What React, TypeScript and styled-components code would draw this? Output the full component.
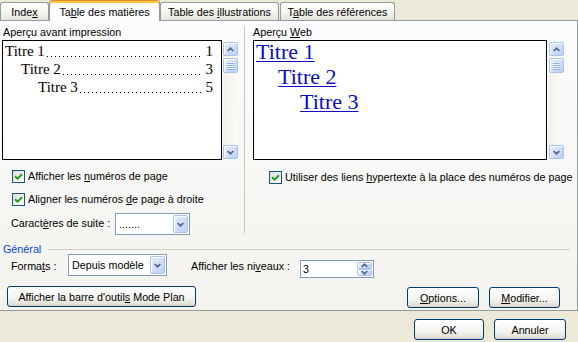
import React from "react";
import styled, { createGlobalStyle, css } from "styled-components";

const Global = createGlobalStyle`
  html, body { margin: 0; padding: 0; background: #ece9d8; }
  body { font-family: "Liberation Sans", Arial, sans-serif; font-size: 10.75px; color: #000; }
  * { box-sizing: border-box; }
`;

const Dialog = styled.div`
  width: 578px;
  height: 342px;
  display: flex;
  flex-direction: column;
  background: #ece9d8;
  overflow: hidden;
`;

const TabStrip = styled.div`
  display: flex;
  align-items: flex-end;
  height: 20px;
  position: relative;
  z-index: 2;
`;

const Tab = styled.div<{ $w: number; $active?: boolean; $ml?: number }>`
  width: ${(p) => p.$w}px;
  margin-left: ${(p) => p.$ml ?? 0}px;
  height: 18px;
  display: flex;
  align-items: center;
  justify-content: center;
  border: 1px solid #919b9c;
  border-bottom: none;
  border-radius: 3px 3px 0 0;
  background: linear-gradient(#ffffff, #f4f4f0 55%, #e4e3dc);
  white-space: nowrap;
  padding-top: 1px;
  ${(p) =>
    p.$active &&
    css`
      position: relative;
      z-index: 1;
      height: 21px;
      margin-bottom: -1px;
      background: #fcfcfe;
      border-top: 1px solid #e68b2c;
      box-shadow: inset 0 2px 0 #ffc73c;
      padding-top: 2px;
    `}
`;

const U = styled.span`
  text-decoration: underline;
`;

const Panel = styled.div`
  height: 291px;
  border: 1px solid #919b9c;
  border-left: none;
  background: linear-gradient(#fcfcfe, #f4f3ee);
  display: flex;
  flex-direction: column;
`;

const TopGrid = styled.div`
  display: grid;
  grid-template-columns: 244px 1px 1fr;
  padding-top: 5px;
`;

const Column = styled.div<{ $pl: number }>`
  display: flex;
  flex-direction: column;
  padding-left: ${(p) => p.$pl}px;
`;

const VRule = styled.div`
  background: #c9c6b8;
  margin-bottom: 2px;
`;

const SectionLabel = styled.div<{ $pl?: number }>`
  height: 13px;
  line-height: 13px;
  margin-bottom: 1px;
  padding-left: ${(p) => p.$pl ?? 0}px;
`;

const PreviewRow = styled.div<{ $gap: number }>`
  display: flex;
  gap: ${(p) => p.$gap}px;
`;

const PreviewBox = styled.div<{ $w: number }>`
  width: ${(p) => p.$w}px;
  height: 120px;
  border: 1px solid #000;
  background: #fff;
  font-family: "Liberation Serif", "Times New Roman", serif;
`;

const PrintList = styled.div`
  padding: 1px 8px 0 2px;
  font-size: 15px;
`;

const TocLine = styled.div<{ $indent: number }>`
  display: flex;
  padding-left: ${(p) => p.$indent}px;
  line-height: 18px;
  white-space: nowrap;
`;

const Leader = styled.span`
  flex: 1;
  height: 18px;
  margin: 0 3px 0 1px;
  background-image: linear-gradient(90deg, #000 1px, transparent 1px);
  background-size: 4px 1px;
  background-repeat: repeat-x;
  background-position: 1px 14px;
`;

const WebList = styled.div`
  margin-top: -2px;
  padding-left: 2px;
  font-size: 22px;
`;

const WebLine = styled.div<{ $indent: number }>`
  padding-left: ${(p) => p.$indent}px;
  line-height: 25px;
  white-space: nowrap;
`;

const WebLink = styled.span`
  color: #0b0bc4;
  text-decoration: underline;
  text-decoration-thickness: 1px;
  text-underline-offset: 2px;
`;

const Scrollbar = styled.div`
  width: 15px;
  height: 117px;
  margin-top: 2px;
  display: flex;
  flex-direction: column;
  background: linear-gradient(90deg, #f1f0ea, #fbfbf8);
`;

const blueBtn = css`
  border: 1px solid #aac1f0;
  border-radius: 2px;
  background: linear-gradient(135deg, #e8effd, #bccff7);
  box-shadow: inset 1px 1px 0 #ffffff;
  display: flex;
  align-items: center;
  justify-content: center;
`;

const ScrollBtn = styled.div`
  ${blueBtn};
  width: 15px;
  height: 14px;
  flex: none;
`;

const Thumb = styled.div`
  ${blueBtn};
  width: 15px;
  height: 15px;
  margin-top: 2px;
  flex: none;
`;

const Grip = styled.div`
  width: 7px;
  height: 8px;
  background: repeating-linear-gradient(to bottom, #eef4fe 0 1px, #8eaef0 1px 2px);
`;

const Track = styled.div`
  flex: 1;
`;

const CheckRow = styled.div<{ $mt: number; $pl: number }>`
  display: flex;
  align-items: center;
  gap: 3px;
  height: 13px;
  line-height: 13px;
  margin-top: ${(p) => p.$mt}px;
  padding-left: ${(p) => p.$pl}px;
  white-space: nowrap;
`;

const CheckBox = styled.span`
  width: 13px;
  height: 13px;
  flex: none;
  border: 1px solid #1c5180;
  background: linear-gradient(135deg, #dcdcd7, #ffffff);
  display: inline-flex;
  align-items: center;
  justify-content: center;
`;

const FieldLine = styled.div<{ $mt: number; $pl: number }>`
  display: flex;
  align-items: flex-start;
  margin-top: ${(p) => p.$mt}px;
  padding-left: ${(p) => p.$pl}px;
`;

const FieldLabel = styled.span<{ $w: number; $mt: number; $ml?: number }>`
  width: ${(p) => p.$w}px;
  margin-top: ${(p) => p.$mt}px;
  margin-left: ${(p) => p.$ml ?? 0}px;
  line-height: 13px;
  white-space: nowrap;
  flex: none;
`;

const Select = styled.div<{ $w: number }>`
  width: ${(p) => p.$w}px;
  height: 22px;
  border: 1px solid #7f9db9;
  background: #fff;
  display: flex;
  align-items: center;
  flex: none;
`;

const SelectValue = styled.span`
  flex: 1;
  padding-left: 3px;
  white-space: nowrap;
  overflow: hidden;
`;

const ArrowBtn = styled.div`
  ${blueBtn};
  width: 15px;
  height: 18px;
  margin-right: 1px;
`;

const Spin = styled.div`
  width: 74px;
  height: 18px;
  margin-top: 6px;
  border: 1px solid #7f9db9;
  background: #fff;
  display: flex;
  flex: none;
`;

const SpinValue = styled.span`
  flex: 1;
  padding-left: 2px;
  line-height: 16px;
`;

const SpinButtons = styled.div`
  width: 16px;
  padding: 1px 1px 1px 0;
  display: flex;
  flex-direction: column;
`;

const SpinBtn = styled.div`
  ${blueBtn};
  flex: 1;
`;

const GroupHeader = styled.div`
  display: flex;
  align-items: center;
  height: 11px;
  line-height: 11px;
  margin-top: 9px;
  padding-left: 3px;
  color: #0046d5;
`;

const GroupRule = styled.div`
  flex: 1;
  height: 1px;
  margin: 0 7px;
  background: #d0d0bf;
`;

const ButtonRow = styled.div<{ $mt: number; $pr: number; $pl: number }>`
  display: flex;
  align-items: flex-start;
  gap: 10px;
  margin-top: ${(p) => p.$mt}px;
  padding: 0 ${(p) => p.$pr}px 0 ${(p) => p.$pl}px;
`;

const Spacer = styled.div`
  flex: 1;
`;

const Button = styled.button<{ $w: number; $mt?: number }>`
  width: ${(p) => p.$w}px;
  height: 21px;
  margin-top: ${(p) => p.$mt ?? 0}px;
  padding: 0;
  border: 1px solid #003c74;
  border-radius: 3px;
  background: linear-gradient(#ffffff, #f3f3ef 60%, #e3e0d6 90%, #d6d0c5);
  font-family: inherit;
  font-size: 10.75px;
  color: #000;
  white-space: nowrap;
  flex: none;
`;

const Footer = styled.div`
  display: flex;
  justify-content: flex-end;
  gap: 10px;
  padding: 8px 12px 0 0;
`;

const Chevron = ({ down }: { down?: boolean }) => (
  <svg width="7" height="5" viewBox="0 0 7 5">
    <path
      d={down ? "M0.7 1 L3.5 3.8 L6.3 1" : "M0.7 4 L3.5 1.2 L6.3 4"}
      stroke="#4d6185"
      strokeWidth="1.7"
      fill="none"
    />
  </svg>
);

const Check = () => (
  <svg width="9" height="9" viewBox="0 0 9 9">
    <path d="M1 4.2 L3.5 6.7 L8 2.2" stroke="#21a121" strokeWidth="2" fill="none" />
  </svg>
);

const VScroll = () => (
  <Scrollbar>
    <ScrollBtn>
      <Chevron />
    </ScrollBtn>
    <Thumb>
      <Grip />
    </Thumb>
    <Track />
    <ScrollBtn>
      <Chevron down />
    </ScrollBtn>
  </Scrollbar>
);

const toc = [
  { t: "Titre 1", n: "1", i: 0 },
  { t: "Titre 2", n: "3", i: 16 },
  { t: "Titre 3", n: "5", i: 33 },
];

const web = [
  { t: "Titre 1", i: 0 },
  { t: "Titre 2", i: 22 },
  { t: "Titre 3", i: 44 },
];

export default function App() {
  return (
    <Dialog>
      <Global />
      <TabStrip>
        <Tab $w={49}>
          <span>
            Inde<U>x</U>
          </span>
        </Tab>
        <Tab $w={111} $active>
          <span>
            Ta<U>b</U>le des matières
          </span>
        </Tab>
        <Tab $w={119}>
          <span>
            Table des <U>i</U>llustrations
          </span>
        </Tab>
        <Tab $w={115} $ml={1}>
          <span>
            T<U>a</U>ble des références
          </span>
        </Tab>
      </TabStrip>
      <Panel>
        <TopGrid>
          <Column $pl={2}>
            <SectionLabel $pl={1}>Aperçu avant impression</SectionLabel>
            <PreviewRow $gap={1}>
              <PreviewBox $w={220}>
                <PrintList>
                  {toc.map((r) => (
                    <TocLine key={r.t} $indent={r.i}>
                      <span>{r.t}</span>
                      <Leader />
                      <span>{r.n}</span>
                    </TocLine>
                  ))}
                </PrintList>
              </PreviewBox>
              <VScroll />
            </PreviewRow>
            <CheckRow $mt={10} $pl={10}>
              <CheckBox>
                <Check />
              </CheckBox>
              <span>
                Afficher les <U>n</U>uméros de page
              </span>
            </CheckRow>
            <CheckRow $mt={10} $pl={10}>
              <CheckBox>
                <Check />
              </CheckBox>
              <span>
                Aligner les numéros <U>d</U>e page à droite
              </span>
            </CheckRow>
            <FieldLine $mt={7} $pl={9}>
              <FieldLabel $w={104} $mt={4}>
                Caract<U>è</U>res de suite :
              </FieldLabel>
              <Select $w={75}>
                <SelectValue>.......</SelectValue>
                <ArrowBtn>
                  <Chevron down />
                </ArrowBtn>
              </Select>
            </FieldLine>
          </Column>
          <VRule />
          <Column $pl={8}>
            <SectionLabel>
              Aperçu <U>W</U>eb
            </SectionLabel>
            <PreviewRow $gap={2}>
              <PreviewBox $w={294}>
                <WebList>
                  {web.map((r) => (
                    <WebLine key={r.t} $indent={r.i}>
                      <WebLink>{r.t}</WebLink>
                    </WebLine>
                  ))}
                </WebList>
              </PreviewBox>
              <VScroll />
            </PreviewRow>
            <CheckRow $mt={11} $pl={16}>
              <CheckBox>
                <Check />
              </CheckBox>
              <span>
                Utiliser des liens <U>h</U>ypertexte à la place des numéros de page
              </span>
            </CheckRow>
          </Column>
        </TopGrid>
        <GroupHeader>
          <span>Général</span>
          <GroupRule />
        </GroupHeader>
        <FieldLine $mt={-1} $pl={11}>
          <FieldLabel $w={57} $mt={6}>
            Forma<U>t</U>s :
          </FieldLabel>
          <Select $w={99}>
            <SelectValue>Depuis modèle</SelectValue>
            <ArrowBtn>
              <Chevron down />
            </ArrowBtn>
          </Select>
          <FieldLabel $w={109} $mt={6} $ml={24}>
            Afficher les ni<U>v</U>eaux :
          </FieldLabel>
          <Spin>
            <SpinValue>3</SpinValue>
            <SpinButtons>
              <SpinBtn>
                <Chevron />
              </SpinBtn>
              <SpinBtn>
                <Chevron down />
              </SpinBtn>
            </SpinButtons>
          </Spin>
        </FieldLine>
        <ButtonRow $mt={8} $pl={7} $pr={17}>
          <Button $w={189}>
            Afficher la barre d'outil<U>s</U> Mode Plan
          </Button>
          <Spacer />
          <Button $w={72} $mt={1}>
            <U>O</U>ptions...
          </Button>
          <Button $w={71} $mt={1}>
            <U>M</U>odifier...
          </Button>
        </ButtonRow>
      </Panel>
      <Footer>
        <Button $w={70}>OK</Button>
        <Button $w={72}>Annuler</Button>
      </Footer>
    </Dialog>
  );
}
